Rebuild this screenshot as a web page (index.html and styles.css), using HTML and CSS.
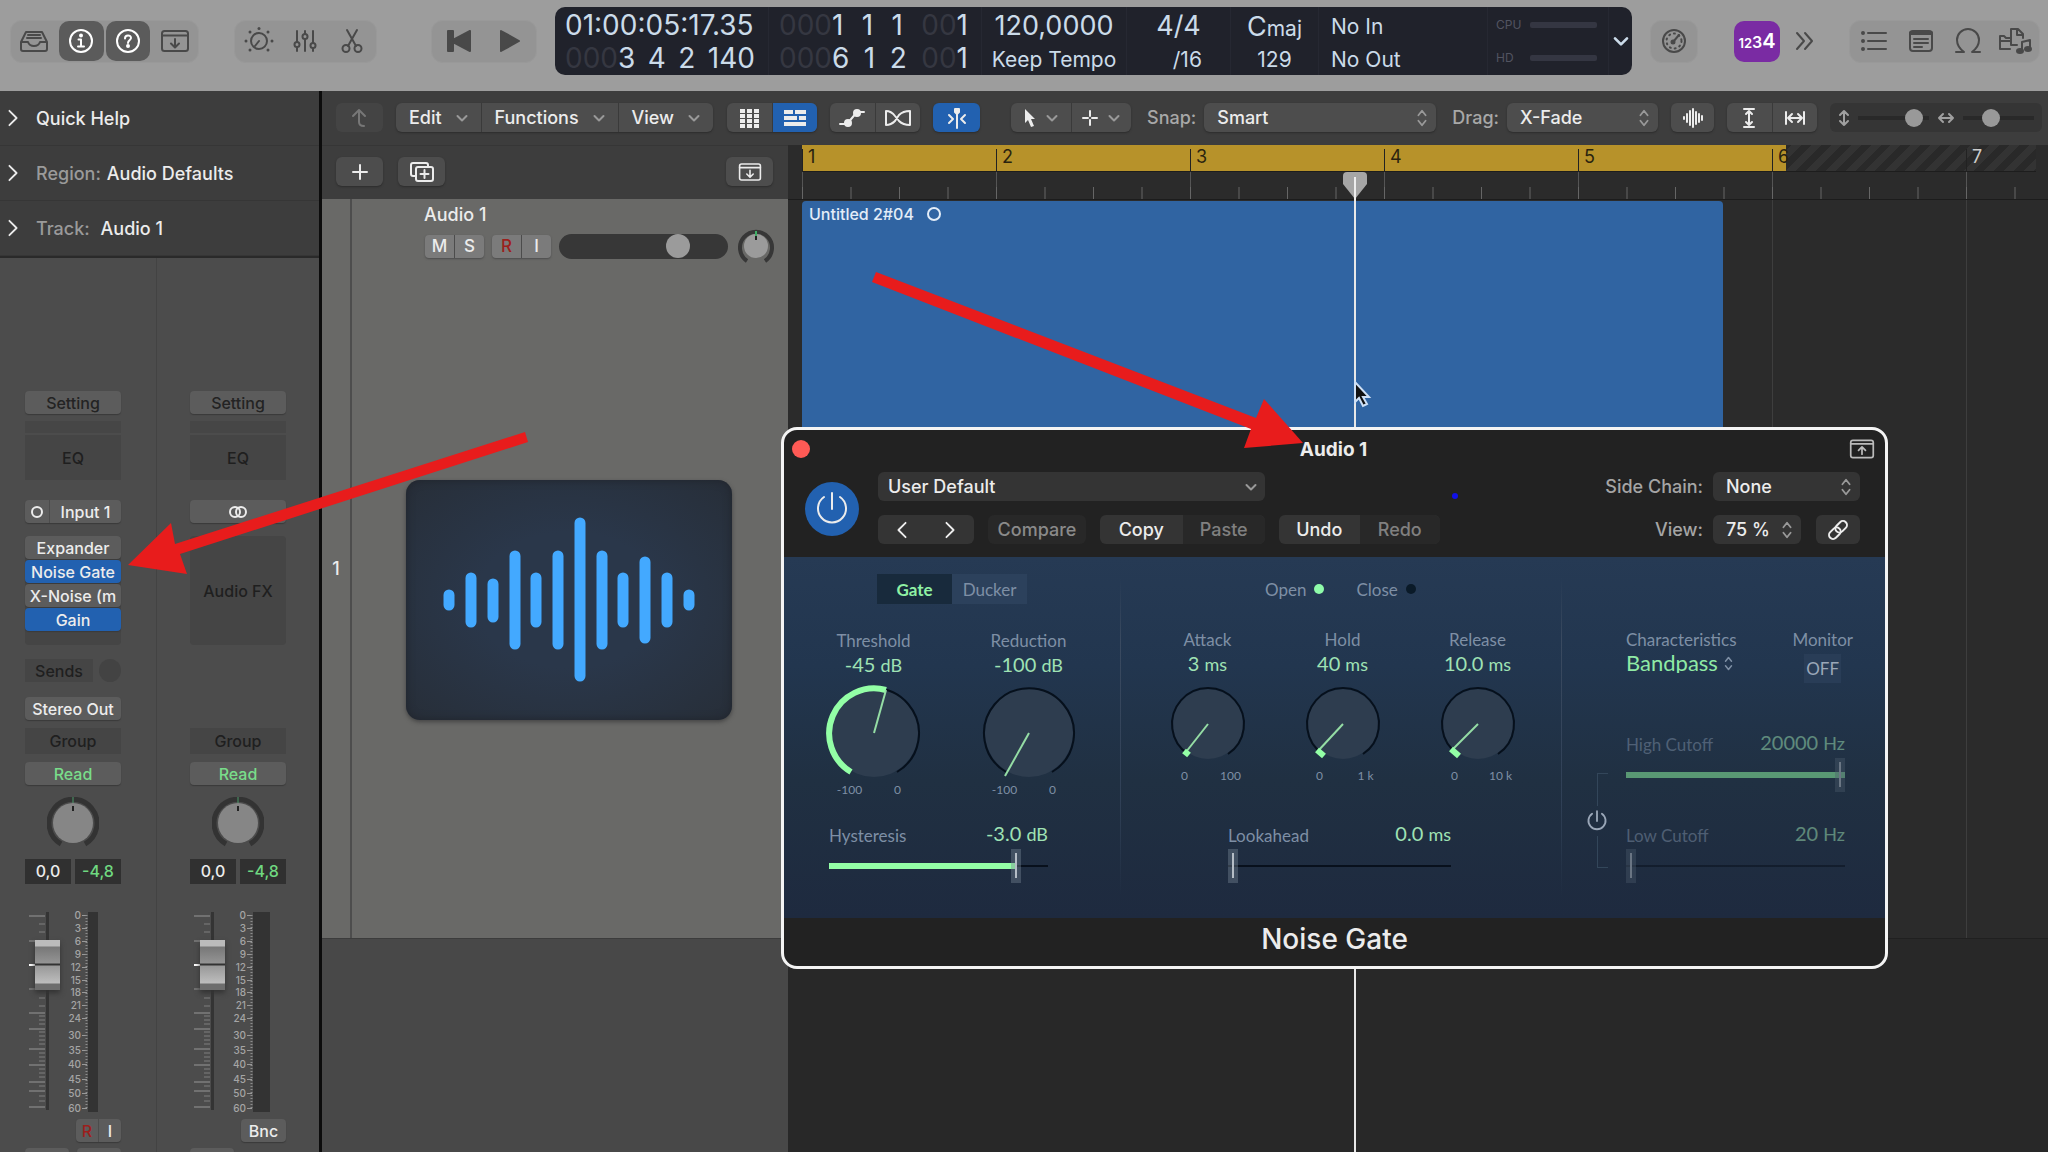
FILE: index.html
```html
<!DOCTYPE html>
<html lang="en">
<head>
    <meta charset="UTF-8"/>
    <title>Noise Gate - Audio 1</title>
    <link rel="stylesheet" href="styles.css">
</head>
<body>

<!-- shared shapes -->
<svg class="defs" aria-hidden="true">
    <symbol id="down" viewBox="0 0 12 12"><path d="M1.500 4l4.500 4.500L10.500 4"/></symbol>
    <symbol id="updown" viewBox="0 0 12 20"><path d="M2 7l4-5 4 5M2 13l4 5 4-5"/></symbol>
    <symbol id="right" viewBox="0 0 12 20"><path d="M2 2l8 8-8 8"/></symbol>
    <symbol id="left" viewBox="0 0 12 20"><path d="M10 2l-8 8 8 8"/></symbol>
    <symbol id="power" viewBox="0 0 36 36"><path d="M18 2v16M10 6a14 14 0 1 0 16 0"/></symbol>
    <symbol id="trayDown" viewBox="0 0 30 24"><rect x="2" y="2" width="26" height="20" rx="2.500"/><path d="M2 6.500h26M15 10v8M11 14.500l4 4 4-4"/></symbol>
    <symbol id="pan" viewBox="0 0 52 52">
        <path d="M14 47A24 24 0 1 1 38 47" fill="none" stroke="#333" stroke-width="5"/>
        <circle cx="26" cy="26" r="20" fill="#868686"/>
        <path d="M26 0v6" stroke="#4d9b6b"/><path d="M26 9v5" stroke="#222" stroke-width="2"/>
    </symbol>
    <symbol id="trackPan" viewBox="0 0 36 36">
        <path d="M9 33A16 16 0 1 1 27 33" fill="none" stroke="#373737" stroke-width="4"/>
        <circle cx="18" cy="18" r="12" fill="#9b9b9b"/>
        <path d="M18 3v5" stroke="#3fae66" stroke-width="2"/><path d="M18 8v4" stroke="#222" stroke-width="2"/>
    </symbol>
    <symbol id="faderTicks" viewBox="0 0 18 198">
        <path d="M0 4h16M0 29h16M0 77h16M0 101h16M0 117h16M0 137h16M0 153h16M0 170h16M0 179h16M0 195h16" stroke="#7d7d7d" stroke-width="1.500"/>
        <path d="M10 12h6M10 20h6M10 86h6M10 94h6M10 104h6M10 108h6M10 112h6M10 120h6M10 124h6M10 128h6M10 132h6M10 141h6M10 145h6M10 149h6M10 157h6M10 161h6M10 165h6M10 174h6M10 184h6M10 189h6" stroke="#6e6e6e" stroke-width="1.500"/>
        <path d="M0 53h8" stroke="#fff" stroke-width="2"/>
    </symbol>
    <symbol id="meterTicks" viewBox="0 0 24 204">
        <path d="M18 5.500h5M18 18.500h5M18 31.500h5M18 44.500h5M18 57.500h5M18 70.500h5M18 82.500h5M18 95.500h5M18 108.500h5M18 125.500h5M18 140.500h5M18 154.500h5M18 169.500h5M18 183.500h5M18 198.500h5" stroke="#999"/>
        <path d="M22.500 5v194" stroke="#8c8c8c" stroke-width="2" stroke-dasharray="1 2"/>
    </symbol>
</svg>

<header class="control-bar">
    <div class="pill pill-views">
        <button aria-label="Library"><svg width="30" height="24" viewBox="0 0 30 24"><path d="M2 13L7 3h16l5 10v7a2 2 0 0 1-2 2H4a2 2 0 0 1-2-2zM2 13h7c1 3 3 4 6 4s5-1 6-4h7M9 6h12M8 9h14"/></svg></button>
        <button class="on" aria-label="Inspector"><svg width="28" height="28" viewBox="0 0 28 28"><circle cx="14" cy="14" r="11"/><circle class="solid" cx="14" cy="8.500" r="1"/><path d="M11.500 12.500H14V19M11 19.500h6"/></svg></button>
        <button class="on" aria-label="Quick Help"><svg width="28" height="28" viewBox="0 0 28 28"><circle cx="14" cy="14" r="11"/><path d="M11 11.500c0-4 6-4 6-.5 0 2-3 2-3 5"/><circle class="solid" cx="14" cy="19" r="1"/></svg></button>
        <button aria-label="Toolbar"><svg width="30" height="24"><use href="#trayDown"/></svg></button>
    </div>
    <div class="pill pill-tools">
        <button aria-label="Smart Controls"><svg width="30" height="30" viewBox="0 0 30 30"><circle cx="15" cy="15" r="8"/><path d="M15 15l-4 5"/><g class="solid dots"><circle cx="15" cy="2.500" r="1.500"/><circle cx="24" cy="6" r="1.500"/><circle cx="28" cy="15" r="1.500"/><circle cx="24" cy="24" r="1.500"/><circle cx="6" cy="24" r="1.500"/><circle cx="2" cy="15" r="1.500"/><circle cx="6" cy="6" r="1.500"/></g></svg></button>
        <button aria-label="Mixer"><svg width="24" height="24" viewBox="0 0 24 24"><path d="M4 2v11M4 18v4M12 2v3M12 10v12M20 2v12M20 19v3"/><circle cx="4" cy="15.500" r="2.500"/><circle cx="12" cy="7.500" r="2.500"/><circle cx="20" cy="16.500" r="2.500"/></svg></button>
        <button aria-label="Editors"><svg width="22" height="26" viewBox="0 0 22 26"><path d="M6 2l9 16M16 2L7 18"/><circle cx="5" cy="20.500" r="3.500"/><circle cx="17" cy="20.500" r="3.500"/></svg></button>
    </div>
    <div class="pill pill-transport">
        <button aria-label="Go to beginning"><svg width="24" height="22" viewBox="0 0 24 22"><path class="solid" d="M1 1h5v9L23 1v20L6 12v9H1z"/></svg></button>
        <button aria-label="Play"><svg width="20" height="22" viewBox="0 0 20 22"><path class="solid" d="M1 1l18 10L1 21z"/></svg></button>
    </div>

    <section class="lcd">
        <div class="lcd-col digits">
            <p><span>01:00:05:17.35</span></p>
            <p><span><i>000</i>3</span><span>4</span><span>2</span><span>140</span></p>
        </div>
        <div class="lcd-col digits">
            <p><span><i>000</i>1</span><span>1</span><span>1</span><span><i>00</i>1</span></p>
            <p><span><i>000</i>6</span><span>1</span><span>2</span><span><i>00</i>1</span></p>
        </div>
        <div class="lcd-col center"><p class="big">120,0000</p><p>Keep Tempo</p></div>
        <div class="lcd-col center"><p class="big">4/4</p><p>&nbsp;&nbsp;&nbsp;/16</p></div>
        <div class="lcd-col center"><p><span class="big">C</span>maj</p><p>129</p></div>
        <div class="lcd-col midi"><p>No In</p><p>No Out</p></div>
        <div class="lcd-col load"><p>CPU<b></b></p><p>HD<b></b></p></div>
        <button class="lcd-menu" aria-label="Display mode"><svg class="line" width="16" height="16"><use href="#down"/></svg></button>
    </section>

    <div class="pill pill-meter">
        <button aria-label="Tuner"><svg width="26" height="26" viewBox="0 0 26 26"><circle cx="13" cy="13" r="11"/><path d="M12 14l6-7"/><circle class="solid" cx="12" cy="14" r="1.500"/><circle cx="13" cy="13" r="7.500" stroke-dasharray="1 4"/></svg></button>
    </div>
    <button class="count-in" aria-label="Count in 1234"><small>12</small><span>3</span><big>4</big></button>
    <button class="more" aria-label="More"><svg class="line" width="20" height="20" viewBox="0 0 20 20"><path d="M2 2l7 8-7 8M10 2l7 8-7 8"/></svg></button>
    <div class="pill pill-lists">
        <button aria-label="List Editors"><svg width="26" height="22" viewBox="0 0 26 22"><path d="M7 3h18M7 11h18M7 19h18"/><g class="solid"><circle cx="2" cy="3" r="1"/><circle cx="2" cy="11" r="1"/><circle cx="2" cy="19" r="1"/></g></svg></button>
        <button aria-label="Note Pad"><svg width="26" height="24" viewBox="0 0 26 24"><rect x="2" y="2" width="22" height="20" rx="3"/><path d="M3 4h20" stroke-width="4"/><path d="M6 10h14M6 14h14M6 18h8"/></svg></button>
        <button aria-label="Loop Browser"><svg width="28" height="26" viewBox="0 0 28 26"><path d="M2 24h8c-4-3-7-7-7-12a11 11 0 0 1 22 0c0 5-3 9-7 12h8"/></svg></button>
        <button aria-label="Browsers"><svg width="34" height="28" viewBox="0 0 34 28"><path d="M12 22H2V9h4l2 2h4M2 14h10M13 18V2h7l5 5v4M19 2v6h6M13 18h6M24 24V15l8-2v9"/><g class="solid"><ellipse cx="22" cy="24" rx="3" ry="2"/><ellipse cx="30" cy="22" rx="3" ry="2"/></g></svg></button>
    </div>
</header>

<div class="workspace">
    <aside class="inspector">
        <button class="disclosure"><svg class="line" width="12" height="18"><use href="#right"/></svg>Quick Help</button>
        <button class="disclosure"><svg class="line" width="12" height="18"><use href="#right"/></svg><span>Region:</span>Audio Defaults</button>
        <button class="disclosure"><svg class="line" width="12" height="18"><use href="#right"/></svg><span>Track:</span>&nbsp;Audio 1</button>

        <div class="strips">
            <section class="strip">
                <button class="key dark setting">Setting</button>
                <div class="gain-box"></div>
                <button class="well eq">EQ</button>
                <div class="input-row key"><button aria-label="Mono"><svg class="line" width="14" height="14" viewBox="0 0 14 14"><circle cx="7" cy="7" r="5"/></svg></button><button class="grow">Input 1</button></div>
                <div class="slots">
                    <button class="key">Expander</button>
                    <button class="key blue">Noise Gate</button>
                    <button class="key">X-Noise (m</button>
                    <button class="key blue">Gain</button>
                </div>
                <div class="sends"><button class="well">Sends</button><i></i></div>
                <button class="key output">Stereo Out</button>
                <button class="well group">Group</button>
                <button class="key read">Read</button>
                <svg class="pan" width="52" height="52"><use href="#pan"/></svg>
                <div class="values"><output>0,0</output><output class="green">-4,8</output></div>
                <div class="fader-row">
                    <svg width="18" height="198"><use href="#faderTicks"/></svg>
                    <input class="fader" type="range" value="81" aria-label="Audio 1 volume">
                    <svg class="scale" width="24" height="204">
                        <text x="17" y="9">0</text><text x="17" y="22">3</text><text x="17" y="35">6</text><text x="17" y="48">9</text>
                        <text x="17" y="61">12</text><text x="17" y="74">15</text><text x="17" y="86">18</text><text x="17" y="99">21</text>
                        <text x="17" y="112">24</text><text x="17" y="129">30</text><text x="17" y="144">35</text><text x="17" y="158">40</text>
                        <text x="17" y="173">45</text><text x="17" y="187">50</text><text x="17" y="202">60</text>
                        <use href="#meterTicks"/>
                    </svg>
                    <div class="meter"></div>
                </div>
                <div class="arm key"><button class="red">R</button><button>I</button></div>
                <div class="cut"><button class="key" aria-label="Mute"></button><button class="key" aria-label="Solo"></button></div>
            </section>
            <section class="strip">
                <button class="key dark setting">Setting</button>
                <div class="gain-box"></div>
                <button class="well eq">EQ</button>
                <button class="input-row key" aria-label="Stereo"><svg class="line" width="20" height="14" viewBox="0 0 20 14"><circle cx="7" cy="7" r="5"/><circle cx="13" cy="7" r="5"/></svg></button>
                <button class="slots well">Audio FX</button>
                <div class="sends"></div>
                <div class="output"></div>
                <button class="well group">Group</button>
                <button class="key read">Read</button>
                <svg class="pan" width="52" height="52"><use href="#pan"/></svg>
                <div class="values"><output>0,0</output><output class="green">-4,8</output></div>
                <div class="fader-row">
                    <svg width="18" height="198"><use href="#faderTicks"/></svg>
                    <input class="fader" type="range" value="81" aria-label="Stereo Out volume">
                    <svg class="scale" width="24" height="204">
                        <text x="17" y="9">0</text><text x="17" y="22">3</text><text x="17" y="35">6</text><text x="17" y="48">9</text>
                        <text x="17" y="61">12</text><text x="17" y="74">15</text><text x="17" y="86">18</text><text x="17" y="99">21</text>
                        <text x="17" y="112">24</text><text x="17" y="129">30</text><text x="17" y="144">35</text><text x="17" y="158">40</text>
                        <text x="17" y="173">45</text><text x="17" y="187">50</text><text x="17" y="202">60</text>
                        <use href="#meterTicks"/>
                    </svg>
                    <div class="meter wide"></div>
                </div>
                <button class="arm key">Bnc</button>
                <div class="cut"><button class="key" aria-label="Mute"></button></div>
            </section>
        </div>
    </aside>

    <main class="editor">
        <div class="edit-bar">
            <button class="btn w47 faded" aria-label="Up"><svg class="line" width="18" height="20" viewBox="0 0 18 20"><path d="M2 8l6-6 6 6M8 2v12c0 3 2 4 5 4"/></svg></button>
            <div class="seg menus">
                <button>Edit<svg class="line" width="12" height="12"><use href="#down"/></svg></button>
                <button>Functions<svg class="line" width="12" height="12"><use href="#down"/></svg></button>
                <button>View<svg class="line" width="12" height="12"><use href="#down"/></svg></button>
            </div>
            <div class="seg pair">
                <button aria-label="Grid"><svg width="20" height="20" viewBox="0 0 20 20"><path class="solid" d="M1 1h5v4H1zM8 1h5v4H8zM15 1h5v4h-5zM1 6h5v4H1zM8 6h5v4H8zM15 6h5v4h-5zM1 11h5v4H1zM8 11h5v4H8zM15 11h5v4h-5zM1 16h5v4H1zM8 16h5v4H8zM15 16h5v4h-5z"/></svg></button>
                <button class="blue" aria-label="Tracks"><svg width="22" height="18" viewBox="0 0 22 18"><path class="solid" d="M0 1h9v4H0zM11 1h11v4H11zM0 7h13v4H0zM15 7h7v4h-7zM0 13h22v4H0z"/></svg></button>
            </div>
            <div class="seg pair">
                <button aria-label="Automation"><svg class="line" width="26" height="20" viewBox="0 0 26 20"><path d="M1 16h7L18 4h7"/><g class="solid"><circle cx="9" cy="15" r="3"/><circle cx="18" cy="5" r="3"/></g></svg></button>
                <button aria-label="Flex"><svg class="line" width="28" height="18" viewBox="0 0 28 18"><path d="M2 2c4 0 6 1 9 5l4 5c3 3 6 4 11 4V2c-5 0-8 1-11 4l-4 6c-3 3-5 4-9 4z"/></svg></button>
            </div>
            <button class="btn w47 blue" aria-label="Catch playhead"><svg class="line" width="20" height="22" viewBox="0 0 20 22"><path d="M10 2v19M2 8l4 4-4 4M18 8l-4 4 4 4"/><path class="solid" d="M8 2h4v3l-2 2-2-2z"/></svg></button>
            <div class="seg tools">
                <button aria-label="Pointer Tool"><svg width="12" height="20" viewBox="0 0 12 20"><path class="solid" d="M1 1l10 10H7l3 7-3 1-3-7-3 3z"/></svg><svg class="line dim" width="12" height="12"><use href="#down"/></svg></button>
                <button aria-label="Marquee Tool"><svg class="line" width="16" height="16" viewBox="0 0 16 16"><path d="M8 1v5M8 10v5M1 8h5M10 8h5"/></svg><svg class="line dim" width="12" height="12"><use href="#down"/></svg></button>
            </div>
            <label for="snap">Snap:</label>
            <div class="select snap"><select id="snap"><option>Smart</option></select><svg class="line" width="12" height="18"><use href="#updown"/></svg></div>
            <label for="drag">Drag:</label>
            <div class="select drag"><select id="drag"><option>X-Fade</option></select><svg class="line" width="12" height="18"><use href="#updown"/></svg></div>
            <button class="btn wave" aria-label="Waveform zoom"><svg class="line" width="20" height="20" viewBox="0 0 20 20"><path d="M1 9v2M4 6v8M7 3v14M10 1v18M13 4v12M16 6v8M19 8v4"/></svg></button>
            <div class="seg pair">
                <button aria-label="Fit vertically"><svg class="line" width="12" height="20" viewBox="0 0 12 20"><path d="M1 1h10M1 19h10M6 3v14M3 6l3-3 3 3M3 14l3 3 3-3"/></svg></button>
                <button aria-label="Fit horizontally"><svg class="line" width="20" height="14" viewBox="0 0 20 14"><path d="M1 1v12M19 1v12M3 7h14M7 3L3 7l4 4M13 3l4 4-4 4"/></svg></button>
            </div>
            <div class="zooms">
                <svg class="line" width="12" height="18" viewBox="0 0 12 18"><path d="M6 2v14M2 6l4-4 4 4M2 12l4 4 4-4"/></svg><input type="range" value="88" aria-label="Vertical zoom">
                <svg class="line" width="18" height="12" viewBox="0 0 18 12"><path d="M2 6h14M6 2L2 6l4 4M12 2l4 4-4 4"/></svg><input type="range" value="36" aria-label="Horizontal zoom">
            </div>
        </div>

        <div class="arrange">
            <section class="headers">
                <div class="header-bar">
                    <button class="btn w47" aria-label="Add track"><svg class="line" width="16" height="16" viewBox="0 0 16 16"><path d="M8 1v14M1 8h14"/></svg></button>
                    <button class="btn w47" aria-label="Duplicate track"><svg class="line" width="24" height="20" viewBox="0 0 24 20"><path d="M5 14H3a2 2 0 0 1-2-2V3a2 2 0 0 1 2-2h13a2 2 0 0 1 2 2v2M14.500 8v8M10.500 12h8"/><rect x="6" y="5" width="17" height="14" rx="2"/></svg></button>
                    <button class="btn w47 push" aria-label="Global tracks"><svg class="line" width="24" height="20"><use href="#trayDown"/></svg></button>
                </div>
                <div class="track">
                    <div class="number">1</div>
                    <div class="track-body">
                        <h2>Audio 1</h2>
                        <div class="track-controls">
                            <div class="key mini"><button>M</button><button>S</button></div>
                            <div class="key mini"><button class="red">R</button><button>I</button></div>
                            <input class="volume" type="range" value="74" aria-label="Track volume">
                            <svg width="36" height="36"><use href="#trackPan"/></svg>
                        </div>
                        <svg class="artwork" viewBox="0 0 326 240">
                            <path d="M43 115v10M65 98v44M87 104v33M109 76v88M130 98v44M152 76v88M174 43v153M196 76v88M217 98v44M239 82v76M261 98v44M283 115v10"/>
                        </svg>
                    </div>
                </div>
            </section>

            <section class="timeline">
                <div class="ruler">
                    <div class="cycle"></div>
                    <div class="bars">
                        <div>1</div><div>2</div><div>3</div><div>4</div><div>5</div><div>6</div><div class="light">7</div>
                    </div>
                </div>
                <div class="lane">
                    <div class="region">Untitled 2#04 <svg class="line" width="16" height="16" viewBox="0 0 16 16"><circle cx="8" cy="8" r="6"/></svg></div>
                </div>
                <div class="empty"></div>
                <div class="playhead"><svg width="26" height="28" viewBox="0 0 26 28"><path d="M1 4q0-4 4-4h16q4 0 4 4v8L13 27 1 12z" fill="#a6a6a6"/><path d="M13 5v23" stroke="#eee" stroke-width="2"/></svg></div>
            </section>
        </div>
    </main>
</div>

<section class="plugin">
    <div class="title-bar">
        <button class="close" aria-label="Close"></button>
        <h1>Audio 1</h1>
        <svg class="line" width="26" height="22" viewBox="0 0 30 24"><rect x="2" y="2" width="26" height="20" rx="2.500"/><path d="M2 6h26M15 18v-8M11 13.500l4-4 4 4"/></svg>
    </div>
    <div class="plugin-head">
        <button class="bypass" aria-label="Power"><svg class="line" width="36" height="36"><use href="#power"/></svg></button>
        <div class="presets">
            <div class="select user"><select aria-label="Preset"><option>User Default</option></select><svg class="line" width="12" height="12"><use href="#down"/></svg></div>
            <div class="preset-row">
                <div class="seg flat"><button class="arrow" aria-label="Previous"><svg class="line" width="12" height="18"><use href="#left"/></svg></button><button class="arrow" aria-label="Next"><svg class="line" width="12" height="18"><use href="#right"/></svg></button></div>
                <button class="btn compare">Compare</button>
                <div class="seg flat"><button>Copy</button><button class="off">Paste</button></div>
                <div class="seg flat"><button>Undo</button><button class="off">Redo</button></div>
            </div>
        </div>
        <i class="marker"></i>
        <div class="routing">
            <label for="chain">Side Chain:</label>
            <div class="select"><select id="chain"><option>None</option></select><svg class="line" width="12" height="18"><use href="#updown"/></svg></div>
            <label for="view">View:</label>
            <div class="view-row">
                <div class="select"><select id="view"><option>75 %</option></select><svg class="line" width="12" height="18"><use href="#updown"/></svg></div>
                <button class="btn link" aria-label="Link"><svg class="line" width="22" height="22" viewBox="0 0 22 22"><g transform="rotate(-45 11 11)"><rect x="0" y="7" width="13" height="8" rx="4"/><rect x="9" y="7" width="13" height="8" rx="4"/></g></svg></button>
            </div>
        </div>
    </div>

    <div class="panel">
        <section class="gate">
            <div class="mode"><button class="active">Gate</button><button>Ducker</button></div>
            <div class="knobs">
                <div class="knob">
                    <h3>Threshold</h3><output>-45 <small>dB</small></output>
                    <svg width="96" height="96" viewBox="-48 -48 96 96"><circle class="face" r="44"/><path class="ring" d="M-23 39A45 45 0 1 1 23 39"/><path class="arc" d="M-23 39A45 45 0 0 1 12-43"/><path class="hand" d="M0 0L12-43"/></svg>
                    <p><span>-100</span><span>0</span></p>
                </div>
                <div class="knob">
                    <h3>Reduction</h3><output>-100 <small>dB</small></output>
                    <svg width="96" height="96" viewBox="-48 -48 96 96"><circle class="face" r="44"/><path class="ring" d="M-23 39A45 45 0 1 1 23 39"/><path class="hand" d="M0 0L-24 43"/></svg>
                    <p><span>-100</span><span>0</span></p>
                </div>
            </div>
            <div class="slider">
                <label for="hysteresis">Hysteresis</label><output>-3.0 <small>dB</small></output>
                <input id="hysteresis" type="range" value="87" class="fill87">
            </div>
        </section>

        <section class="envelope">
            <div class="status"><span>Open</span><i class="lit"></i><span>Close</span><i></i></div>
            <div class="knobs">
                <div class="knob small">
                    <h3>Attack</h3><output>3 <small>ms</small></output>
                    <svg width="80" height="80" viewBox="-40 -40 80 80"><circle class="face" r="35"/><path class="ring" d="M-20 30A36 36 0 1 1 20 30"/><path class="hand" d="M0 0L-22 28"/><path class="arc" d="M-19 31l-5-4"/></svg>
                    <p><span>0</span><span>100</span></p>
                </div>
                <div class="knob small">
                    <h3>Hold</h3><output>40 <small>ms</small></output>
                    <svg width="80" height="80" viewBox="-40 -40 80 80"><circle class="face" r="35"/><path class="ring" d="M-20 30A36 36 0 1 1 20 30"/><path class="hand" d="M0 0L-25 27"/><path class="arc" d="M-19 32l-7-6"/></svg>
                    <p><span>0</span><span>1 k</span></p>
                </div>
                <div class="knob small">
                    <h3>Release</h3><output>10.0 <small>ms</small></output>
                    <svg width="80" height="80" viewBox="-40 -40 80 80"><circle class="face" r="35"/><path class="ring" d="M-20 30A36 36 0 1 1 20 30"/><path class="hand" d="M0 0L-26 26"/><path class="arc" d="M-19 32l-8-7"/></svg>
                    <p><span>0</span><span>10 k</span></p>
                </div>
            </div>
            <div class="slider">
                <label for="lookahead">Lookahead</label><output>0.0 <small>ms</small></output>
                <input id="lookahead" type="range" value="0">
            </div>
        </section>

        <section class="filter">
            <div class="filter-top">
                <div>
                    <label for="character">Characteristics</label>
                    <div class="bandpass"><select id="character"><option>Bandpass</option></select><svg class="line" width="9" height="15"><use href="#updown"/></svg></div>
                </div>
                <div class="monitor"><h3>Monitor</h3><button>OFF</button></div>
            </div>
            <div class="cutoffs">
                <div class="bracket"><b></b><button aria-label="Filter power"><svg class="line" width="22" height="22"><use href="#power"/></svg></button><b class="low"></b></div>
                <div class="dimmed">
                    <div class="slider">
                        <label for="high">High Cutoff</label><output>20000 <small>Hz</small></output>
                        <input id="high" type="range" value="100" class="fill100">
                    </div>
                    <div class="slider">
                        <label for="low">Low Cutoff</label><output>20 <small>Hz</small></output>
                        <input id="low" type="range" value="0">
                    </div>
                </div>
            </div>
        </section>
    </div>
    <footer>Noise Gate</footer>
</section>

<!-- annotation arrows and the mouse pointer -->
<svg class="notes" width="1400" height="600" viewBox="0 0 1400 600" aria-hidden="true">
    <path fill="#e81c1c" d="M128 565L171 523 175 544 525 432 528 442 180 554 187 574zM1303 443L1264 399 1256 418 876 272 872 282 1251 429 1244 448z"/>
    <path fill="#111" stroke="#cfe0f5" stroke-width="2" d="M1355 382v20l4-4 4 8 4-2-4-7h6z"/>
</svg>

</body>
</html>
```
FILE: styles.css
```css
* {
  box-sizing: border-box;
}

body {
  margin: 0;
  height: 100vh;
  overflow: hidden;
  display: flex;
  flex-direction: column;
  position: relative;
  background: #2b2b2b;
  color: #ececec;
  font-family: Inter, "Liberation Sans", sans-serif;
  font-size: 18px;
  font-weight: 500;
}

button,
select,
input {
  font: inherit;
  color: inherit;
  margin: 0;
}

button {
  display: flex;
  align-items: center;
  justify-content: center;
  padding: 0;
  border: none;
  background: none;
  white-space: nowrap;
}

h1,
h2,
h3,
p {
  margin: 0;
}

svg {
  display: block;
  flex: none;
}

.line {
  fill: none;
  stroke: currentColor;
  stroke-width: 2;
  stroke-linecap: round;
  stroke-linejoin: round;
}

.solid {
  fill: currentColor;
}

.dim {
  color: #999;
}

.defs {
  position: absolute;
  width: 0;
  height: 0;
}

/* control bar */

.control-bar {
  flex: none;
  height: 91px;
  padding: 7px 8px 16px 10px;
  display: flex;
  align-items: center;
  background: #9d9d9d;
  color: #494949;
}

.pill {
  height: 43px;
  padding: 0 1px;
  display: flex;
  align-items: center;
  border-radius: 12px;
  background: #949494;
  border: 1px solid #999;
}

.pill button {
  flex: 1;
  height: 40px;
  border-radius: 10px;
}

.pill svg {
  fill: none;
  stroke: currentColor;
  stroke-width: 2;
  stroke-linecap: round;
  stroke-linejoin: round;
}

.pill .solid {
  fill: currentColor;
}

.pill .dots {
  stroke: none;
}

.pill .on {
  background: #5b5b5b;
  color: #fff;
}

.pill-views {
  width: 189px;
  gap: 2px;
}

.pill-tools {
  width: 143px;
  margin-left: 35px;
}

.pill-transport {
  width: 106px;
  margin-left: 54px;
}

.pill-meter {
  width: 48px;
}

.pill-lists {
  width: 191px;
  margin-left: 34px;
}

.lcd {
  flex: 1;
  height: 68px;
  margin: 0 18px;
  display: grid;
  grid-template-columns: 214fr 213fr 145fr 104fr 88fr 169fr 121fr 23fr;
  border-radius: 10px;
  background: #20222b;
  color: #cbdbe9;
  font-size: 21px;
  font-weight: 400;
}

.lcd-col {
  min-width: 0;
  display: flex;
  flex-direction: column;
  justify-content: center;
  border-right: 1px solid #262832;
  white-space: nowrap;
}

.lcd-col p {
  height: 33px;
  line-height: 37px;
}

.lcd-col .big {
  font-size: 27px;
}

.lcd-col p.big {
  line-height: 35px;
}

.digits {
  padding: 0 13px 0 10px;
  font-size: 28px;
}

.digits p {
  display: flex;
  justify-content: space-between;
  line-height: 34px;
}

.digits i {
  font-style: normal;
  color: #353741;
}

.center {
  text-align: center;
}

.midi {
  padding-left: 12px;
}

.load {
  padding: 0 11px 0 8px;
  font-size: 12px;
  color: #525461;
}

.load p {
  display: flex;
  align-items: center;
  justify-content: space-between;
}

.load b {
  width: 67px;
  height: 6px;
  border-radius: 2px;
  background: #343642;
}

.count-in {
  width: 46px;
  height: 41px;
  margin-left: 36px;
  align-items: baseline;
  border-radius: 10px;
  background: #7a2ba3;
  color: #fff;
  font-weight: 600;
  line-height: 41px;
}

.count-in small {
  font-size: 13px;
}

.count-in span {
  font-size: 16px;
}

.count-in big {
  font-size: 20px;
}

.more {
  width: 20px;
  margin-left: 15px;
}

/* inspector */

.workspace {
  flex: 1;
  min-height: 0;
  display: flex;
}

.inspector {
  flex: none;
  width: 322px;
  display: flex;
  flex-direction: column;
  border-right: 3px solid #0c0c0c;
  background: #3d3d3d;
}

.disclosure {
  flex: none;
  height: 55px;
  padding-left: 7px;
  justify-content: flex-start;
  border-bottom: 1px solid #363636;
}

.disclosure svg {
  margin-right: 17px;
}

.disclosure span {
  margin-right: 6px;
  color: #9a9a9a;
}

.strips {
  flex: 1;
  display: grid;
  grid-template-columns: 156px 1fr;
  border-top: 2px solid #2a2a2a;
  background: #4c4c4c;
  font-size: 16px;
}

.strip {
  min-width: 0;
  padding: 133px 35px 0 25px;
}

.strip + .strip {
  padding: 133px 33px 0;
  border-left: 1px solid #434343;
}

.key {
  width: 100%;
  height: 23px;
  border-radius: 4px;
  background: #5c5c5c;
  box-shadow: 0 1px 1px #3a3a3a;
}

.key.dark {
  color: #232323;
}

.key.blue,
.blue {
  background: #2261b0;
}

.well {
  width: 100%;
  background: #454545;
  color: #1f1f1f;
}

.gain-box {
  height: 12px;
  margin-top: 7px;
  background: #464646;
}

.eq {
  height: 45px;
  margin-top: 2px;
}

.input-row {
  display: flex;
  margin-top: 20px;
}

.input-row button:first-child {
  width: 25px;
  border-right: 1px solid #4c4c4c;
}

.grow {
  flex: 1;
}

.slots {
  height: 109px;
  margin-top: 13px;
  display: flex;
  flex-direction: column;
  gap: 1px;
  border-radius: 4px;
  background: #454545;
}

.slots .key {
  flex: none;
}

.sends {
  height: 23px;
  margin-top: 14px;
  display: flex;
  gap: 6px;
}

.sends i {
  flex: none;
  width: 22px;
  border-radius: 50%;
  background: #434343;
}

.output {
  height: 23px;
  margin-top: 15px;
}

.group {
  height: 26px;
  margin-top: 8px;
}

.read {
  margin-top: 8px;
  color: #79dc8a;
}

.pan {
  margin: 12px auto 0;
}

.values {
  display: grid;
  grid-template-columns: 1fr 1fr;
  gap: 4px;
  margin-top: 10px;
}

.values output {
  height: 25px;
  line-height: 25px;
  background: #303030;
  text-align: center;
}

.green {
  color: #6fd880;
}

.red {
  color: #9c1f1c;
}

.fader-row {
  height: 200px;
  margin-top: 28px;
  display: flex;
  align-items: flex-start;
  padding-left: 4px;
}

.fader {
  appearance: none;
  writing-mode: vertical-lr;
  direction: rtl;
  width: 25px;
  height: 198px;
  margin-left: -12px;
  background: linear-gradient(90deg, transparent 11px, #343434 11px, #343434 14px, transparent 14px);
}

.fader::-webkit-slider-thumb {
  appearance: none;
  width: 25px;
  height: 50px;
  background: linear-gradient(#bbb 0, #bbb 6px, #777 7px, #949494 23px, #333 24px, #333 25px, #999 26px, #bdbdbd 43px, #6d6d6d 44px);
  box-shadow: 0 3px 5px #333;
}

.scale {
  margin-top: -2px;
  margin-left: 4px;
  fill: #a5a5a5;
  font-size: 10px;
  text-anchor: end;
}

.meter {
  width: 10px;
  height: 200px;
  background: #333;
}

.meter.wide {
  width: 17px;
}

.arm {
  display: flex;
  width: 45px;
  margin-top: 7px;
  margin-left: auto;
}

.arm button {
  flex: 1;
}

.arm button + button,
.mini button + button {
  border-left: 1px solid #4c4c4c;
}

.cut {
  height: 4px;
  margin-top: 6px;
  display: grid;
  grid-template-columns: 44px 44px;
  gap: 8px;
  overflow: hidden;
}

/* editor menus */

.editor {
  flex: 1;
  min-width: 0;
  display: flex;
  flex-direction: column;
}

.edit-bar {
  flex: none;
  height: 54px;
  padding: 0 6px 1px 14px;
  display: flex;
  align-items: center;
  gap: 13px;
  background: #3d3d3d;
}

.btn,
.seg,
.select {
  height: 29px;
  border-radius: 6px;
  background: #4d4d4d;
  box-shadow: 0 1px 2px #2c2c2c;
}

.btn.blue {
  background: #2261b0;
}

.w47 {
  flex: none;
  width: 47px;
}

.faded {
  background: #444;
  color: #777;
  box-shadow: none;
}

.seg {
  flex: none;
  display: flex;
  overflow: hidden;
}

.seg button {
  flex: 1;
}

.seg button + button {
  border-left: 1px solid #3a3a3a;
}

.menus {
  width: 309px;
  margin-right: 1px;
}

.menus button {
  flex: 1 1 auto;
  gap: 14px;
  padding: 0 8px;
}

.menus svg {
  color: #999;
}

.pair {
  width: 90px;
}

.tools {
  width: 120px;
  margin-left: 18px;
}

.tools button {
  gap: 10px;
}

.edit-bar label {
  margin: 0 -5px 0 3px;
  color: #a8a8a8;
}

.select {
  display: grid;
  align-items: center;
}

.select select,
.select svg {
  grid-area: 1 / 1;
}

.select select {
  appearance: none;
  width: 100%;
  height: 100%;
  padding: 0 13px;
  border: none;
  background: none;
}

.select svg {
  justify-self: end;
  margin-right: 8px;
  color: #999;
  pointer-events: none;
}

.snap {
  flex: 1;
}

.drag {
  flex: none;
  width: 151px;
}

.wave {
  flex: none;
  width: 43px;
}

.zooms {
  flex: none;
  width: 212px;
  height: 29px;
  display: flex;
  align-items: center;
  gap: 8px;
  padding: 0 8px;
  border-radius: 6px;
  background: #353535;
  color: #a0a0a0;
}

.zooms input {
  appearance: none;
  flex: 1;
  min-width: 0;
  height: 18px;
  background: linear-gradient(transparent 7px, #292929 7px, #292929 11px, transparent 11px);
}

.zooms input::-webkit-slider-thumb {
  appearance: none;
  width: 18px;
  height: 18px;
  border-radius: 50%;
  background: #999;
}

/* arrange area */

.menus {
  width: 317px;
}

.arrange {
  flex: 1;
  min-height: 0;
  display: flex;
}

.headers {
  flex: none;
  width: 466px;
  background: #484848;
}

.header-bar {
  height: 54px;
  padding: 0 15px 2px 14px;
  display: flex;
  align-items: center;
  gap: 15px;
  border-top: 1px solid #363636;
  background: #3d3d3d;
}

.push {
  margin-left: auto;
}

.track {
  height: 740px;
  display: flex;
  background: #696967;
  border-bottom: 1px solid #3c3c3c;
}

.number {
  width: 30px;
  display: flex;
  align-items: center;
  justify-content: center;
  border-right: 2px solid #4d4d4d;
}

.track-body {
  flex: 1;
  padding: 5px 14px 0 54px;
}

.track-body h2 {
  padding-left: 18px;
  font-size: 18px;
  font-weight: 500;
  line-height: 22px;
}

.track-controls {
  height: 36px;
  margin: 2px 0 216px 19px;
  display: flex;
  align-items: center;
  gap: 8px;
}

.track-controls svg {
  margin-left: 2px;
}

.mini {
  display: flex;
  width: 59px;
  background: #7b7b7b;
  box-shadow: 0 1px 2px #4d4d4d;
  font-size: 17px;
}

.mini button {
  flex: 1;
}

.volume {
  appearance: none;
  flex: 1;
  min-width: 0;
  height: 25px;
  border-radius: 13px;
  background: #373737;
}

.volume::-webkit-slider-thumb {
  appearance: none;
  width: 24px;
  height: 24px;
  border-radius: 50%;
  background: #9b9b9b;
}

.artwork {
  width: 326px;
  height: 240px;
  border-radius: 14px;
  background: radial-gradient(#2a374a 40%, #272e38);
  box-shadow: 0 2px 4px #444, inset 0 0 8px #20242c;
  fill: none;
  stroke: #43a9ff;
  stroke-width: 11;
  stroke-linecap: round;
}

.timeline {
  flex: 1;
  min-width: 0;
  position: relative;
  display: flex;
  flex-direction: column;
  background: #2b2b2b;
}

.ruler {
  flex: none;
  height: 54px;
  display: grid;
  grid-template-rows: 27px 27px;
  margin-right: 12px;
  padding-left: 14px;
  overflow: hidden;
}

.cycle {
  grid-area: 1 / 1;
  background: linear-gradient(90deg, #b7922a 984px, transparent 984px), repeating-linear-gradient(135deg, #333 0, #333 7px, #292929 7px, #292929 14px);
  border-bottom: 1px solid #1d1d1d;
}

.bars {
  grid-area: 1 / 1 / 3 / 2;
  display: flex;
  color: #2a230f;
}

.bars div {
  flex: none;
  width: 194px;
  height: 54px;
  padding-left: 6px;
  line-height: 23px;
  font-weight: 400;
  background: linear-gradient(90deg, #666 1px, transparent 1px) 0 42px / 25% 12px repeat-x, linear-gradient(#222 23px, #555 23px) 0 4px / 1px 50px no-repeat;
}

.bars .light {
  color: #ccc;
}

.lane {
  height: 740px;
  padding: 1px 0 0 14px;
  border-top: 1px solid #1c1c1c;
  border-bottom: 1px solid #202020;
  background: linear-gradient(#3e3e3e, #3e3e3e) 984px 0 / 1px 100% no-repeat, linear-gradient(#3e3e3e, #3e3e3e) 1178px 0 / 1px 100% no-repeat, #2b2b2b;
}

.region {
  display: flex;
  align-items: flex-start;
  gap: 12px;
  width: 921px;
  height: 600px;
  padding: 5px 7px;
  border-radius: 4px;
  background: #3064a2;
  color: #e3edf8;
  font-size: 16px;
  line-height: 16px;
}

.empty {
  flex: 1;
  background: #282828;
}

.playhead {
  position: absolute;
  top: 27px;
  bottom: 0;
  left: 554px;
  width: 26px;
  background: linear-gradient(90deg, transparent 12px, #e8e8e8 12px, #e8e8e8 14px, transparent 14px);
}

/* plug-in window */

.plugin {
  position: absolute;
  top: 427px;
  left: 781px;
  width: 1107px;
  overflow: hidden;
  border: 3px solid #f4f4f4;
  border-radius: 16px;
  background: #222;
}

.title-bar {
  height: 38px;
  padding: 0 10px 0 8px;
  display: grid;
  grid-template-columns: 26px 1fr 26px;
  align-items: center;
}

.title-bar svg {
  color: #bbb;
}

.title-bar h1 {
  font-size: 19px;
  font-weight: 700;
  text-align: center;
}

.close {
  width: 18px;
  height: 18px;
  border-radius: 50%;
  background: #ff5a55;
}

.plugin-head {
  height: 89px;
  padding: 4px 25px 0 21px;
  display: flex;
}

.plugin .btn,
.plugin .seg,
.plugin .select {
  background: #343434;
  box-shadow: none;
}

.bypass {
  width: 54px;
  height: 54px;
  margin: 10px 19px 0 0;
  border-radius: 50%;
  background: #2261b0;
}

.presets {
  width: 563px;
}

.user {
  width: 387px;
}

.user select {
  padding: 0 10px;
}

.preset-row {
  margin-top: 14px;
  display: grid;
  grid-template-columns: 96px 98px 165px 161px;
  gap: 14px;
}

.plugin .btn.compare {
  background: #282828;
  color: #8a8a8a;
}

.seg.flat button + button {
  border-left: none;
}

.flat .off {
  background: #282828;
  color: #808080;
}

.marker {
  width: 6px;
  height: 6px;
  margin: 21px 0 0 11px;
  border-radius: 50%;
  background: #1010e8;
}

.routing {
  margin-left: auto;
  display: grid;
  grid-template-columns: auto 147px;
  gap: 14px 10px;
  align-content: start;
  line-height: 29px;
}

.routing label {
  color: #a5a5a5;
  text-align: right;
}

.view-row {
  display: grid;
  grid-template-columns: 88px 44px;
  gap: 15px;
}

.panel {
  display: grid;
  grid-template-columns: 336fr 441fr 324fr;
  height: 361px;
  background: linear-gradient(#263a54, #22364f 30%, #203042 62%, #1e2a3f);
  color: #7e8fa5;
  font-family: Lato, "Open Sans", sans-serif;
  font-size: 17px;
  font-weight: 400;
}

.panel section {
  min-width: 0;
  display: flex;
  flex-direction: column;
  padding-bottom: 35px;
  background: linear-gradient(transparent, #3a4a60 20%, #304056 70%, transparent) 0 20px / 1px 320px no-repeat;
}

.panel .gate {
  background: none;
}

.panel h3 {
  font-size: 17px;
  font-weight: 400;
  line-height: 20px;
}

.panel output {
  color: #9fe2b4;
  font-size: 20px;
  line-height: 26px;
}

.panel output small {
  font-size: 18px;
}

.mode {
  display: grid;
  grid-template-columns: 75px 75px;
  margin: 17px 0 27px 93px;
}

.mode button {
  height: 30px;
  background: #2c415c;
}

.mode .active {
  background: #182a3c;
  color: #8ff0a4;
  font-weight: 700;
}

.knobs {
  display: flex;
}

.gate .knobs {
  padding: 0 14px 0 12px;
}

.knob {
  flex: 1;
  display: flex;
  flex-direction: column;
  align-items: center;
}

.knob svg {
  margin-top: 7px;
}

.knob p {
  width: 74px;
  display: flex;
  justify-content: space-between;
  font-size: 12px;
  line-height: 18px;
}

.knob p span {
  width: 26px;
  text-align: center;
}

.small p {
  width: 72px;
  margin-top: 3px;
}

.face {
  fill: #2e3d4f;
}

.ring,
.arc,
.hand {
  fill: none;
}

.ring {
  stroke: #06101c;
  stroke-width: 2;
}

.arc {
  stroke: #93ffa6;
  stroke-width: 6;
}

.hand {
  stroke: #95dda5;
  stroke-width: 2;
}

.slider {
  display: grid;
  grid-template-columns: 1fr auto;
  align-items: center;
}

.panel .slider output {
  padding-bottom: 4px;
  line-height: 22px;
}

.slider input {
  grid-column: 1 / 3;
  appearance: none;
  width: 100%;
  height: 34px;
  background: linear-gradient(#08101c, #08101c) 0 16px / 100% 2px no-repeat;
}

.slider input::-webkit-slider-thumb {
  appearance: none;
  width: 10px;
  height: 34px;
  background: linear-gradient(90deg, transparent 4px, #b5bdc6 4px, #b5bdc6 6px, transparent 6px) 0 4px / 10px 25px no-repeat, rgba(120, 135, 150, 0.4);
}

.slider .fill87 {
  background: linear-gradient(#93ffa6, #93ffa6) 0 14px / 86% 6px no-repeat, linear-gradient(#08101c, #08101c) 0 16px / 100% 2px no-repeat;
}

.slider .fill100 {
  background: linear-gradient(#93ffa6, #93ffa6) 0 14px / 100% 6px no-repeat;
}

.gate > .slider {
  margin: auto 72px 0 45px;
}

.envelope .slider {
  margin: auto 110px 0 108px;
}

.status {
  height: 30px;
  margin: 17px 0 26px 145px;
  display: flex;
  align-items: center;
}

.status i {
  width: 10px;
  height: 10px;
  margin: 0 32px 0 8px;
  border-radius: 50%;
  background: #0a1a28;
}

.status .lit {
  background: #8ffcaa;
}

.envelope .knobs {
  padding: 0 16px 0 20px;
}

.filter-top {
  display: flex;
  justify-content: space-between;
  margin: 73px 32px 48px 65px;
  line-height: 20px;
}

.bandpass {
  display: flex;
  align-items: center;
  gap: 6px;
  height: 26px;
}

.bandpass select {
  appearance: none;
  padding: 0;
  border: none;
  background: none;
  color: #8feaa5;
  font-size: 22px;
}

.monitor button {
  width: 37px;
  height: 29px;
  margin: 4px auto 0;
  background: #293d57;
  color: #9aa7b8;
}

.cutoffs {
  display: flex;
  margin: auto 40px 0 25px;
}

.bracket {
  width: 40px;
  display: flex;
  flex-direction: column;
  padding: 42px 9px 15px 0;
}

.bracket b {
  flex: 1;
  width: 11px;
  margin-left: 11px;
  border-left: 1px solid #33465a;
  border-top: 1px solid #33465a;
}

.bracket .low {
  border-top: none;
  border-bottom: 1px solid #33465a;
}

.bracket button {
  width: 22px;
  height: 30px;
  color: #9aa7b8;
}

.bracket svg {
  stroke-width: 3;
}

.dimmed {
  flex: 1;
  opacity: 0.5;
}

.dimmed .slider + .slider {
  margin-top: 30px;
}

.plugin footer {
  height: 48px;
  line-height: 42px;
  text-align: center;
  font-size: 28px;
}

.notes {
  position: absolute;
  top: 0;
  left: 0;
  pointer-events: none;
}
```
